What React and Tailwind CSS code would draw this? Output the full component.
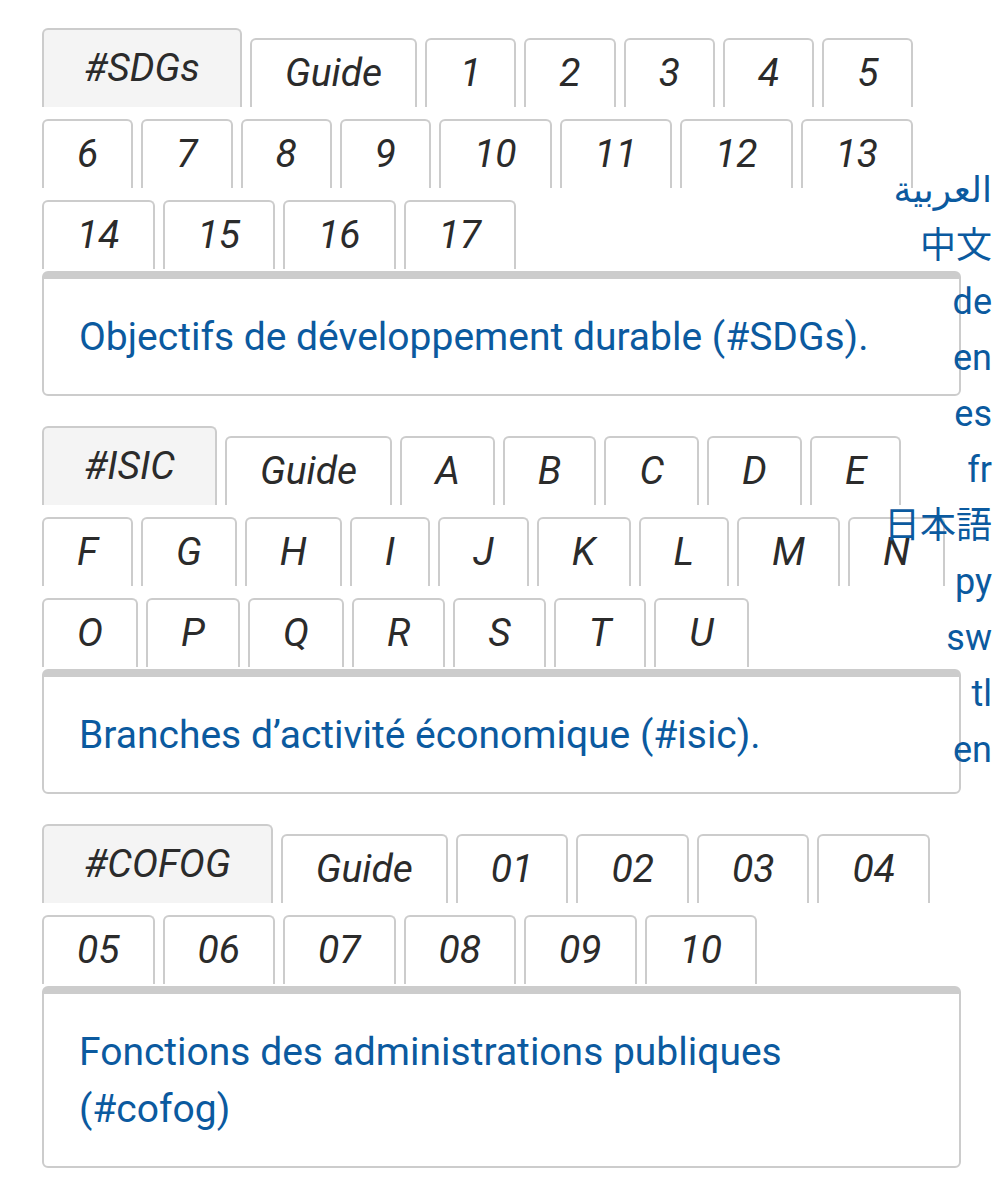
const sections = [
  {
    tag: '#SDGs',
    tabs: ['1', '2', '3', '4', '5', '6', '7', '8', '9', '10', '11', '12', '13', '14', '15', '16', '17'],
    text: 'Objectifs de développement durable (#SDGs).',
  },
  {
    tag: '#ISIC',
    tabs: ['A', 'B', 'C', 'D', 'E', 'F', 'G', 'H', 'I', 'J', 'K', 'L', 'M', 'N', 'O', 'P', 'Q', 'R', 'S', 'T', 'U'],
    text: 'Branches d’activité économique (#isic).',
  },
  {
    tag: '#COFOG',
    tabs: ['01', '02', '03', '04', '05', '06', '07', '08', '09', '10'],
    text: 'Fonctions des administrations publiques (#cofog)',
  },
]

const languages = ['العربية', '中文', 'de', 'en', 'es', 'fr', '日本語', 'py', 'sw', 'tl', 'en']

function Tab({ label, active }) {
  return (
    <div
      className={
        active
          ? 'flex h-[79px] items-center justify-center rounded-t-md border-2 border-b-0 border-[#cccccc] bg-[#f4f4f4] px-[40px] italic text-[#2b2b2b]'
          : 'flex h-[69px] items-center justify-center rounded-t-md border-2 border-b-0 border-[#cccccc] bg-white px-[33px] italic text-[#2b2b2b]'
      }
    >
      {label}
    </div>
  )
}

function Section({ tag, tabs, text }) {
  return (
    <div>
      <div className="flex w-[918px] flex-wrap items-end gap-x-2 gap-y-3">
        <Tab label={tag} active />
        <Tab label="Guide" />
        {tabs.map((t) => (
          <Tab key={t} label={t} />
        ))}
      </div>
      <div className="mt-[2px] w-[919px] rounded-md border-2 border-t-8 border-[#cccccc] bg-white px-[35px] pb-[28px] pt-[30px] text-[#0b5a9f]">
        {text}
      </div>
    </div>
  )
}

export default function App() {
  return (
    <div
      className="relative min-h-[1200px] bg-white text-[39px] leading-[57px]"
      style={{ fontFamily: 'Roboto, "DejaVu Sans", "Noto Sans CJK JP", sans-serif' }}
    >
      <div className="flex flex-col gap-[30px] pl-[42px] pt-[28px]">
        {sections.map((s) => (
          <Section key={s.tag} {...s} />
        ))}
      </div>
      <div className="absolute right-[12px] top-[162px] flex flex-col items-end text-[36px] leading-[56px] text-[#0b5a9f]">
        {languages.map((l, i) => (
          <span key={i}>{l}</span>
        ))}
      </div>
    </div>
  )
}
